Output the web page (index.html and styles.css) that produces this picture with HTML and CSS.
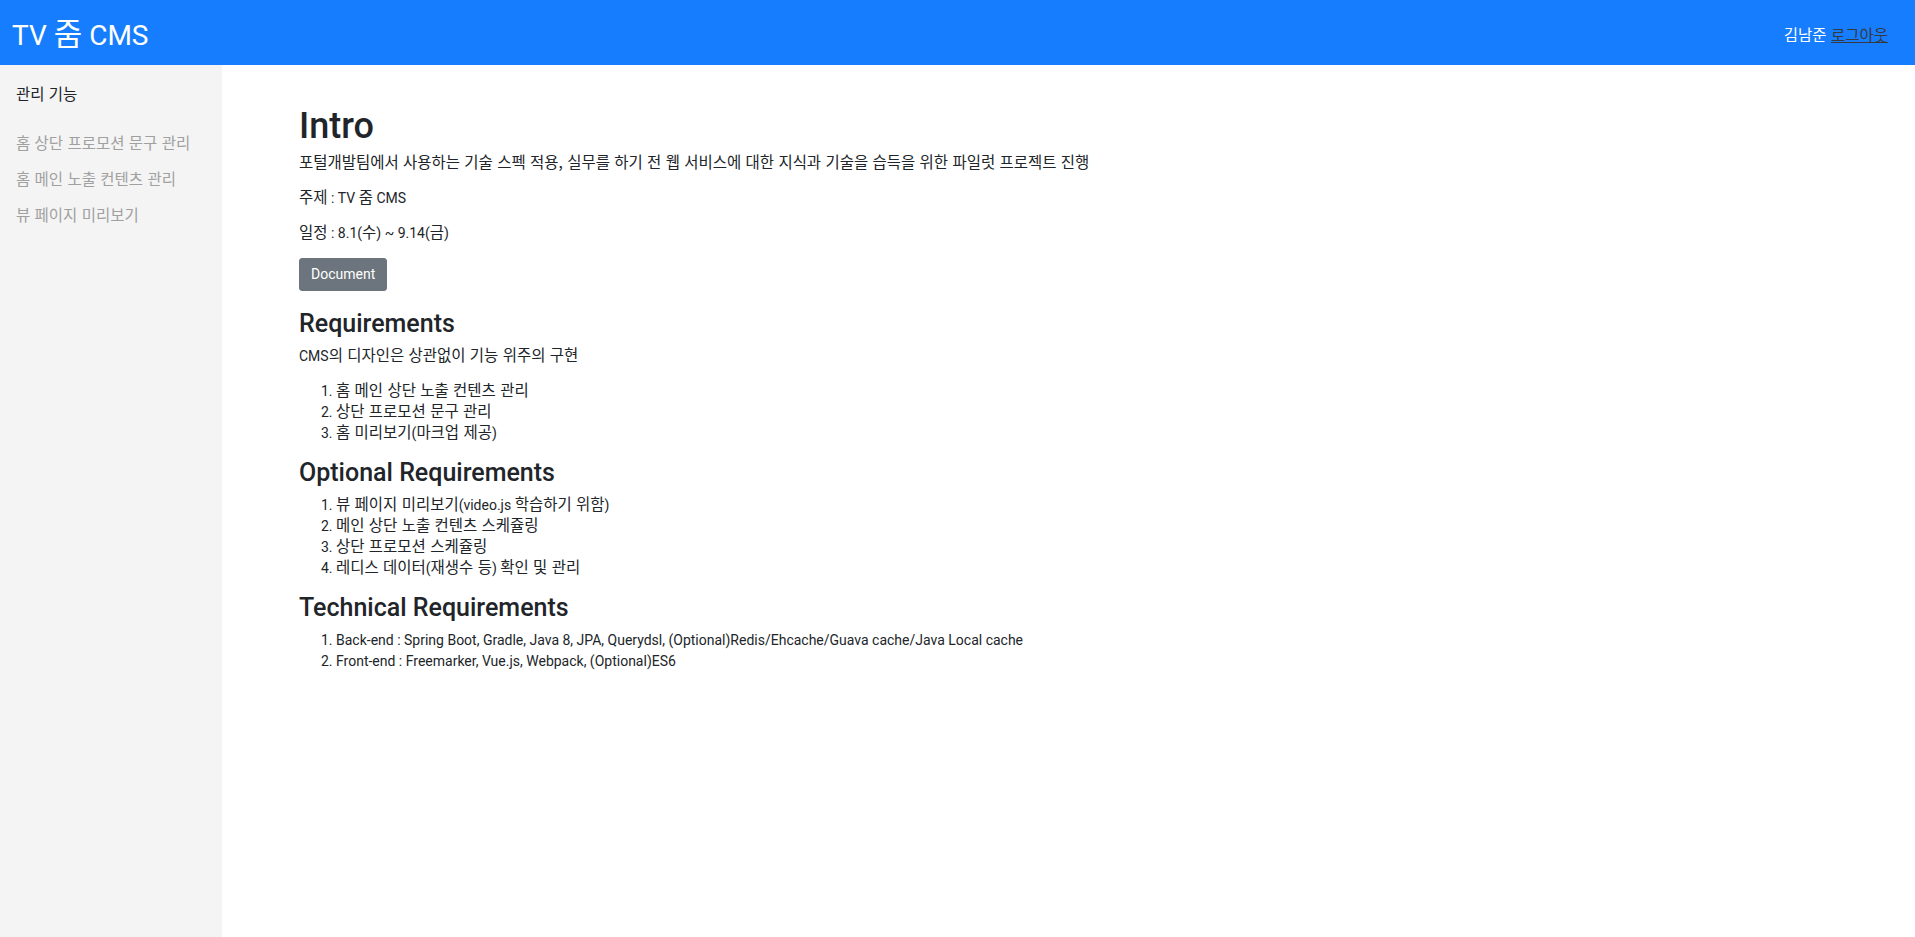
FILE: index.html
```html
<!DOCTYPE html>
<html lang="ko">
<head>
<meta charset="utf-8">
<title>TV 줌 CMS</title>
<link rel="stylesheet" href="styles.css">
</head>
<body>
<header class="topbar">
  <div class="brand">TV <span class="k">줌</span> CMS</div>
  <div class="user"><span class="user-name">김남준</span> <a class="logout" href="#">로그아웃</a></div>
</header>
<div class="layout">
  <nav class="sidebar">
    <div class="side-title">관리 기능</div>
    <ul class="side-menu">
      <li><a href="#">홈 상단 프로모션 문구 관리</a></li>
      <li><a href="#">홈 메인 노출 컨텐츠 관리</a></li>
      <li><a href="#">뷰 페이지 미리보기</a></li>
    </ul>
  </nav>
  <main class="content">
    <h1 class="title">Intro</h1>
    <p><span class="k">포털개발팀에서 사용하는 기술 스펙 적용, 실무를 하기 전 웹 서비스에 대한 지식과 기술을 습득을 위한 파일럿 프로젝트 진행</span></p>
    <p><span class="k">주제</span> : TV <span class="k">줌</span> CMS</p>
    <p><span class="k">일정</span> : 8.1(<span class="k">수</span>) ~ 9.14(<span class="k">금</span>)</p>
    <div class="actions"><a class="btn" href="#">Document</a></div>
    <h4 class="section">Requirements</h4>
    <p>CMS<span class="k">의 디자인은 상관없이 기능 위주의 구현</span></p>
    <ol>
      <li><span class="k">홈 메인 상단 노출 컨텐츠 관리</span></li>
      <li><span class="k">상단 프로모션 문구 관리</span></li>
      <li><span class="k">홈 미리보기</span>(<span class="k">마크업 제공</span>)</li>
    </ol>
    <h4 class="section">Optional Requirements</h4>
    <ol>
      <li><span class="k">뷰 페이지 미리보기</span>(video.js <span class="k">학습하기 위함</span>)</li>
      <li><span class="k">메인 상단 노출 컨텐츠 스케쥴링</span></li>
      <li><span class="k">상단 프로모션 스케쥴링</span></li>
      <li><span class="k">레디스 데이터</span>(<span class="k">재생수 등</span>) <span class="k">확인 및 관리</span></li>
    </ol>
    <h4 class="section">Technical Requirements</h4>
    <ol>
      <li>Back-end : Spring Boot, Gradle, Java 8, JPA, Querydsl, (Optional)Redis/Ehcache/Guava cache/Java Local cache</li>
      <li>Front-end : Freemarker, Vue.js, Webpack, (Optional)ES6</li>
    </ol>
  </main>
</div>
</body>
</html>
```

FILE: styles.css
```css
* { box-sizing: border-box; }
html, body { margin: 0; padding: 0; height: 100%; }
body {
  font-family: Roboto, "Noto Sans CJK KR", sans-serif;
  font-size: 14px;
  line-height: 21px;
  color: #212529;
  background: #fff;
  display: flex;
  flex-direction: column;
}
.k {
  font-family: "Noto Sans CJK KR", sans-serif;
  font-size: 1.107em;
  line-height: 1;
}
.topbar {
  height: 65px;
  flex: 0 0 65px;
  background: #167dff;
  display: flex;
  align-items: center;
  justify-content: space-between;
  padding: 0 27px 0 12px;
}
.brand {
  color: #fff;
  font-size: 28px;
  line-height: 1;
}
.user {
  font-family: "Noto Sans CJK KR", sans-serif;
  font-size: 15.5px;
  line-height: 21px;
  color: #fff;
  padding-top: 3px;
}
.logout { color: #343a40; text-decoration: underline; }
.layout { flex: 1; display: flex; }
.sidebar {
  width: 222px;
  flex: 0 0 222px;
  background: #f4f4f4;
  padding: 17px 16px;
  font-family: "Noto Sans CJK KR", sans-serif;
}
.side-title { color: #212529; font-size: 15.5px; line-height: 22px; }
.side-menu { list-style: none; margin: 20px 0 0; padding: 0; font-size: 15.5px; }
.side-menu li { line-height: 22px; padding: 7px 0; }
.side-menu a { color: #a0a0a0; text-decoration: none; }
.content { flex: 1; padding: 39.5px 0 0 77px; }
.title {
  font-size: 36px;
  font-weight: 500;
  line-height: 42px;
  margin: 0 0 6px;
}
p { margin: 0 0 14px; }
.actions { margin: 1px 0 18px; }
.btn {
  display: inline-block;
  background: #6c757d;
  border: 1px solid #6c757d;
  border-radius: 3px;
  color: #fff;
  text-decoration: none;
  padding: 5px 11px;
  line-height: 21px;
  font-size: 14px;
}
.section {
  font-size: 25px;
  font-weight: 500;
  line-height: 29px;
  margin: 3px 0 8px;
}
ol { margin: 0 0 14px; padding-left: 37px; }
ol li { line-height: 21px; }
```
